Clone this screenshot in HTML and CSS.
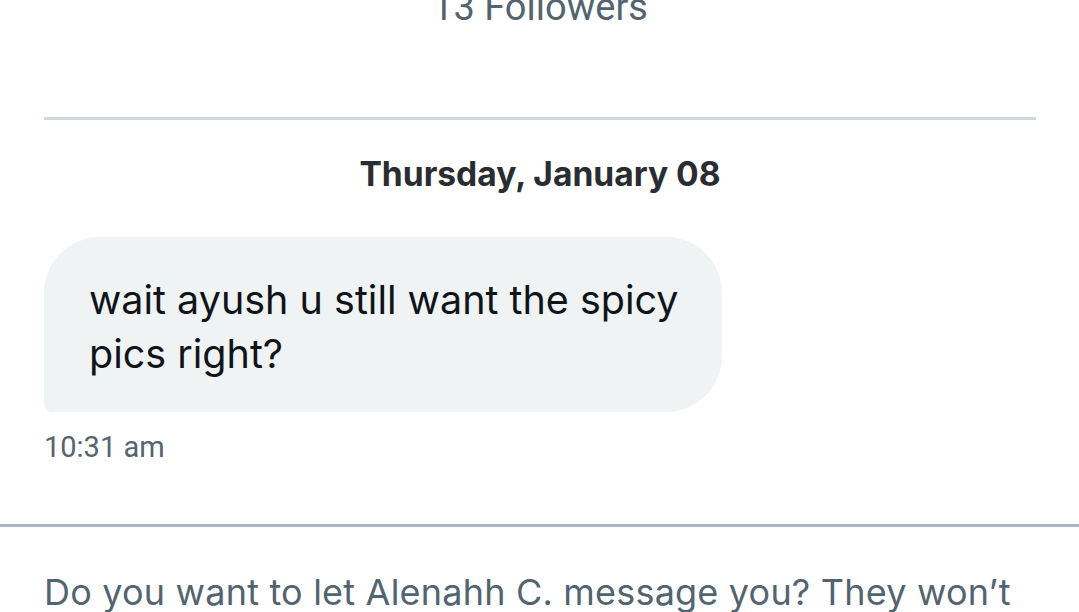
FILE: index.html
```html
<!DOCTYPE html>
<html lang="en">
<head>
    <meta charset="UTF-8">
    <meta name="viewport" content="width=device-width, initial-scale=1.0">
    <title>Messages</title>
    <link rel="stylesheet" href="styles.css">
</head>
<body>
    <div id="conversation">
        <div id="profile-header">
            <p class="followers">13 Followers</p>
        </div>

        <div class="day-divider">Thursday, January 08</div>

        <div class="message received">
            <div class="bubble">wait ayush u still want the spicy pics right?</div>
            <div class="timestamp">10:31 am</div>
        </div>
    </div>

    <div id="request-panel">
        <p class="request-text">Do you want to let Alenahh C. message you? They won’t</p>
    </div>
</body>
</html>
```

FILE: styles.css
```css
body {
    margin: 0;
    overflow: hidden;
    background-color: white;
    font-family: 'Inter', 'Roboto', sans-serif;
    color: #0f1419;
}

#conversation {
    padding: 0 43px 0 44px;
    height: 524px;
    box-sizing: border-box;
}

/* プロフィールの下の部分 */
#profile-header {
    display: flex;
    flex-direction: column;
    border-bottom: 3px solid #cfd9de;
    height: 117px;
}

.followers {
    margin: 0;
    margin-top: -12px; /* 上が画面外に切れている */
    text-align: center;
    color: #536471;
    font-family: 'Roboto', sans-serif;
    font-size: 38px;
    line-height: 38px;
}

.day-divider {
    text-align: center;
    font-weight: bold;
    font-size: 33.6px;
    line-height: 40px;
    margin-top: 34px;
    color: #292d32;
}

.message {
    margin-top: 43px;
}

.bubble {
    background-color: #eff3f4;
    width: 678px;
    box-sizing: border-box;
    padding: 36px 40px 31px 45px;
    border-radius: 56px 56px 56px 8px;
    font-size: 39.5px;
    line-height: 54px;
}

.timestamp {
    margin-top: 18px;
    color: #536471;
    font-family: 'Roboto', sans-serif;
    font-size: 29px;
    line-height: 34px;
}

#request-panel {
    border-top: 3px solid #a9b4bb;
    padding: 0 44px;
}

.request-text {
    margin: 43px 0 0;
    color: #536471;
    font-size: 36px;
    line-height: 44px;
    letter-spacing: 0.2px;
    white-space: nowrap;
}
```
